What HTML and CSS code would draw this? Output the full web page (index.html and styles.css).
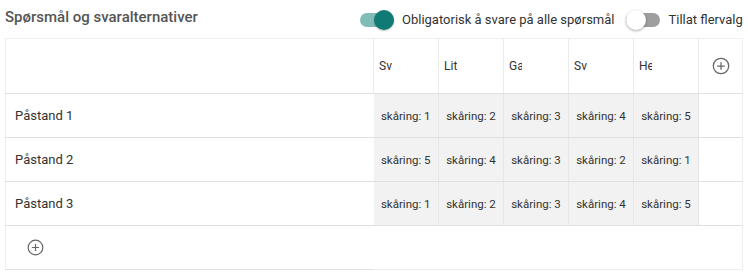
FILE: index.html
```html
<!DOCTYPE html>
<html lang="no">
<head>
<meta charset="utf-8">
<link rel="stylesheet" href="styles.css">
</head>
<body>
<div class="panel">
  <div class="topbar">
    <h2 class="title">Spørsmål og svaralternativer</h2>
    <div class="toggles">
      <label class="toggle">
        <span class="switch on"><span class="track"></span><span class="thumb"></span></span>
        <span class="toggle-label">Obligatorisk å svare på alle spørsmål</span>
      </label>
      <label class="toggle">
        <span class="switch off"><span class="track"></span><span class="thumb"></span></span>
        <span class="toggle-label">Tillat flervalg</span>
      </label>
    </div>
  </div>
  <table class="grid">
    <colgroup>
      <col class="c-label">
      <col class="c-opt"><col class="c-opt"><col class="c-opt"><col class="c-opt"><col class="c-opt">
      <col class="c-add">
    </colgroup>
    <thead>
      <tr class="head-row">
        <th class="label-head"></th>
        <th class="opt-head"><span class="opt-input">Svært uenig</span></th>
        <th class="opt-head"><span class="opt-input">Litt uenig</span></th>
        <th class="opt-head"><span class="opt-input">Ganske enig</span></th>
        <th class="opt-head"><span class="opt-input">Svært enig</span></th>
        <th class="opt-head"><span class="opt-input">Helt enig</span></th>
        <th class="add-head">
          <svg class="plus" viewBox="0 0 24 24" width="20" height="20"><circle cx="12" cy="12" r="9.25" fill="none" stroke="#666" stroke-width="1.5"/><path d="M12 7.5v9M7.5 12h9" stroke="#666" stroke-width="1.5" fill="none"/></svg>
        </th>
      </tr>
    </thead>
    <tbody>
      <tr class="row">
        <td class="label">Påstand 1</td>
        <td class="score">skåring: 1</td><td class="score">skåring: 2</td><td class="score">skåring: 3</td><td class="score">skåring: 4</td><td class="score">skåring: 5</td>
        <td class="blank"></td>
      </tr>
      <tr class="row">
        <td class="label">Påstand 2</td>
        <td class="score">skåring: 5</td><td class="score">skåring: 4</td><td class="score">skåring: 3</td><td class="score">skåring: 2</td><td class="score">skåring: 1</td>
        <td class="blank"></td>
      </tr>
      <tr class="row">
        <td class="label">Påstand 3</td>
        <td class="score">skåring: 1</td><td class="score">skåring: 2</td><td class="score">skåring: 3</td><td class="score">skåring: 4</td><td class="score">skåring: 5</td>
        <td class="blank"></td>
      </tr>
      <tr class="add-row">
        <td class="add-cell">
          <svg class="plus" viewBox="0 0 24 24" width="19" height="19"><circle cx="12" cy="12" r="9.25" fill="none" stroke="#666" stroke-width="1.5"/><path d="M12 7.5v9M7.5 12h9" stroke="#666" stroke-width="1.5" fill="none"/></svg>
        </td>
        <td class="add-rest" colspan="6"></td>
      </tr>
    </tbody>
  </table>
</div>
</body>
</html>
```
FILE: styles.css
```css
* { box-sizing: border-box; }
html, body { margin: 0; padding: 0; background: #fff; }
body {
  font-family: Roboto, "Liberation Sans", Arial, sans-serif;
  color: #333;
  overflow: hidden;
  width: 748px;
}
.panel { padding: 0 0 0 5px; }
.topbar {
  display: flex;
  align-items: flex-start;
  height: 38px;
  white-space: nowrap;
}
.title {
  margin: 0;
  padding-top: 8px;
  font-size: 15px;
  font-weight: 500;
  color: #555;
  line-height: 18px;
  flex: none;
  width: 355px;
}
.toggles {
  display: flex;
  align-items: center;
  padding-top: 10px;
  gap: 12px;
  flex: none;
}
.toggle {
  display: flex;
  align-items: center;
  gap: 8px;
  font-size: 13px;
  color: #333;
}
.switch {
  position: relative;
  width: 34px;
  height: 20px;
  flex: none;
}
.track {
  position: absolute;
  left: 0; top: 3px;
  width: 34px; height: 14px;
  border-radius: 7px;
}
.thumb {
  position: absolute;
  top: 0;
  width: 20px; height: 20px;
  border-radius: 50%;
}
.switch.on .track { background: #80bcb8; }
.switch.on .thumb { left: 14px; background: #107a74; box-shadow: 0 1px 2px rgba(0,0,0,.25); }
.switch.off .track { background: #9e9e9e; }
.switch.off .thumb { left: 0; background: #fff; box-shadow: 0 1px 3px rgba(0,0,0,.35); }
.toggle-label { line-height: 20px; }

.grid {
  border-collapse: collapse;
  table-layout: fixed;
  width: 737px;
  border: 1px solid #efefef;
}
.c-label { width: 368px; }
.c-opt { width: 65px; }
.c-add { width: 44px; }
.grid th, .grid td { padding: 0; font-weight: 400; }
.head-row { height: 55px; }
.head-row th {
  border-bottom: 1px solid #e0e0e0;
  border-right: 1px solid #ebebeb;
  text-align: left;
  vertical-align: middle;
}
.head-row th.add-head { text-align: center; border-right: 1px solid #efefef; }
.opt-input {
  display: block;
  width: 18px;
  padding-left: 5px;
  overflow: hidden;
  white-space: nowrap;
  font-size: 12px;
  color: #333;
}
.plus { display: block; margin: 0 auto; }
.row { height: 44px; }
.row td { border-bottom: 1px solid #e0e0e0; vertical-align: middle; }
.label { padding-left: 9px !important; font-size: 13px; color: #333; }
.score {
  background: #f2f2f2;
  border-right: 1px solid #e6e6e6;
  text-align: center;
  font-size: 11.5px;
  color: #333;
  white-space: nowrap;
}
.add-row { height: 44px; }
.add-cell { border-bottom: 1px solid #e0e0e0; vertical-align: middle; }
.add-cell .plus { margin: 0 0 0 20px; }
```
